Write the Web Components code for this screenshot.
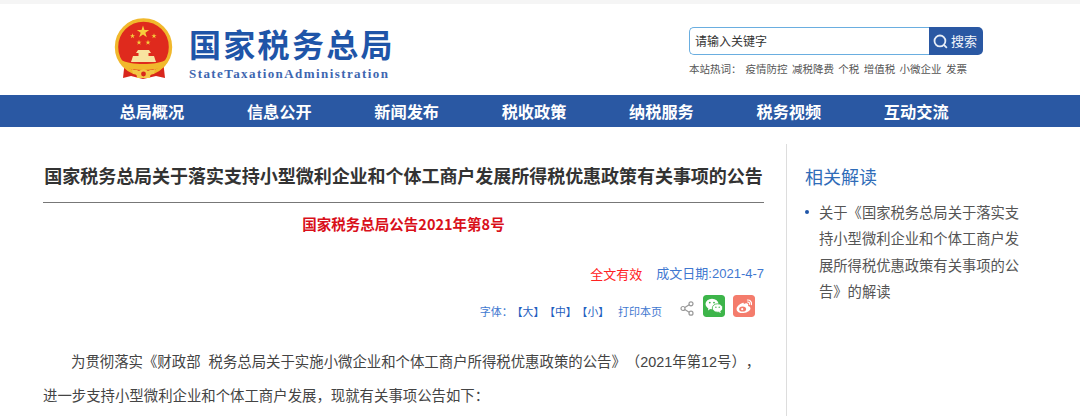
<!DOCTYPE html>
<html lang="zh">
<head>
<meta charset="utf-8">
<title>国家税务总局</title>
<style>
  html, body { margin: 0; padding: 0; background: #fff; height: 416px; overflow: hidden; }
  body { font-family: "Liberation Sans", "Noto Sans CJK SC", sans-serif; color: #444; text-spacing-trim: space-all; }
</style>
</head>
<body>
<site-header></site-header>
<main-nav></main-nav>
<page-body>
  <doc-article></doc-article>
  <side-related slot="side"></side-related>
</page-body>

<script>
// five pointed star as a polygon, for the emblem
function star(cx, cy, r, fill) {
  const pts = [];
  for (let i = 0; i < 10; i++) {
    const rad = i % 2 ? r * 0.382 : r;
    const a = -Math.PI / 2 + i * Math.PI / 5;
    pts.push((cx + rad * Math.cos(a)).toFixed(2) + "," + (cy + rad * Math.sin(a)).toFixed(2));
  }
  return `<polygon points="${pts.join(" ")}" fill="${fill}"/>`;
}

class SiteHeader extends HTMLElement {
  constructor() {
    super();
    this.attachShadow({ mode: "open" });
  }
  connectedCallback() {
    this.shadowRoot.innerHTML = `
    <style>
      :host { display: block; height: 95px; box-sizing: border-box; background: #fff; border-top: 4px solid #f5f5f5; }
      .wrap { display: flex; justify-content: space-between; height: 100%; padding: 0 97px 0 114px; }
      .logo { display: flex; gap: 15px; padding-top: 14px; }
      .logo svg { display: block; width: 60px; height: 66px; }
      .names { padding-top: 10px; }
      .cn { font: bold 32px/36px "Liberation Sans", "Noto Sans CJK SC", sans-serif; letter-spacing: 2.3px; color: #1f55a8; white-space: nowrap; }
      .en { font: bold 13px/14px "Liberation Serif", serif; letter-spacing: 1.42px; color: #3d66b0; margin-top: 3px; white-space: nowrap; }
      .tools { width: 294px; padding-top: 23px; }
      .search { display: flex; height: 28px; box-sizing: border-box; }
      .input { flex: 1; box-sizing: border-box; border: 1px solid #6aaee0; border-right: 0; border-radius: 5px 0 0 5px; font: 12px/25px "Noto Sans CJK SC", sans-serif; color: #333; padding-left: 5px; }
      .btn { width: 54px; box-sizing: border-box; padding-left: 4px; display: flex; align-items: center; gap: 3px; background: #2a58a3; border-radius: 0 5px 5px 0; color: #f2f5fa; font: 13px/26px "Noto Sans CJK SC", sans-serif; }
      .btn svg { width: 15px; height: 15px; }
      .hot { display: flex; margin-top: 6px; font: 10.5px/16px "Noto Sans CJK SC", sans-serif; color: #555; white-space: nowrap; }
      .hot span { margin-right: 4.4px; }
      .hot .lead { margin-right: 4px; }
    </style>
    <div class="wrap">
      <div class="logo">
        <svg viewBox="0 0 60 66">
          <path d="M11 42 L9 60 L17 58 L29 61 L42 58 L51 60 L49 42 Z" fill="#d8261c"/>
          <circle cx="29.5" cy="29" r="27" fill="#df2a1d" stroke="#f1b82c" stroke-width="3.4"/>
          ${star(29, 14, 6.5, "#f6cf3d")}
          ${star(18.5, 18, 2.7, "#f6cf3d")}
          ${star(40, 18, 2.7, "#f6cf3d")}
          ${star(25, 24.5, 2.7, "#f6cf3d")}
          ${star(34, 24.5, 2.7, "#f6cf3d")}
          <path d="M24 32 H35 L37 35 H34.5 V38 H40 L42 44 H17 L19 38 H24.5 V35 H22 Z" fill="#f8e4a0"/>
          <path d="M5 41 C12 45 20 46 29.5 46 C39 46 47 45 54 41 L51 48 C45 51 38 52 29.5 52 C21 52 14 51 8 48 Z" fill="#f1b82c"/>
          <path d="M18 51 C21 53 23 51 25 53 C27 51 32 51 34 53 C36 51 38 53 41 51 L40 56 C37 55 36 57 36 60 H23 C23 57 22 55 19 56 Z" fill="#f3c648"/>
          <circle cx="29.5" cy="56" r="2.4" fill="#d8261c"/>
        </svg>
        <div class="names">
          <div class="cn">国家税务总局</div>
          <div class="en">StateTaxationAdministration</div>
        </div>
      </div>
      <div class="tools">
        <div class="search">
          <div class="input">请输入关键字</div>
          <div class="btn">
            <svg viewBox="0 0 16 16" fill="none" stroke="#e8eef7" stroke-width="1.9"><circle cx="7.4" cy="7.4" r="5.8"/><path d="M11.6 11.6 L14.8 14.8"/></svg>
            <span>搜索</span>
          </div>
        </div>
        <div class="hot"><span class="lead">本站热词：</span><span>疫情防控</span><span>减税降费</span><span>个税</span><span>增值税</span><span>小微企业</span><span>发票</span></div>
      </div>
    </div>`;
  }
}

class MainNav extends HTMLElement {
  constructor() {
    super();
    this.attachShadow({ mode: "open" });
  }
  connectedCallback() {
    const items = ["总局概况", "信息公开", "新闻发布", "税收政策", "纳税服务", "税务视频", "互动交流"];
    this.shadowRoot.innerHTML = `
    <style>
      :host { display: block; height: 32px; background: #2a58a3; }
      ul { display: flex; gap: 63px; margin: 0; padding: 0 0 0 119.5px; list-style: none; }
      li { width: 64.4px; font: bold 16.2px/32px "Noto Sans CJK SC", sans-serif; color: #fff; white-space: nowrap; }
    </style>
    <ul>${items.map(t => `<li>${t}</li>`).join("")}</ul>`;
  }
}

class PageBody extends HTMLElement {
  constructor() {
    super();
    this.attachShadow({ mode: "open" });
  }
  connectedCallback() {
    this.shadowRoot.innerHTML = `
    <style>
      :host { display: flex; align-items: flex-start; padding: 17px 0 0 43px; }
      .side { margin-left: 22px; }
    </style>
    <slot></slot>
    <div class="side"><slot name="side"></slot></div>`;
  }
}

class DocArticle extends HTMLElement {
  constructor() {
    super();
    this.attachShadow({ mode: "open" });
  }
  connectedCallback() {
    this.shadowRoot.innerHTML = `
    <style>
      :host { display: block; width: 721px; font-family: "Noto Sans CJK SC", sans-serif; text-spacing-trim: space-all; }
      h1 { margin: 0; padding: 17px 0 12px; border-bottom: 1px solid #777; font-size: 18px; letter-spacing: -0.04px; line-height: 29px; font-weight: bold; color: #333; text-align: center; white-space: nowrap; }
      .no { margin-top: 10px; font-size: 14.5px; line-height: 22px; font-weight: bold; color: #d9101a; text-align: center; }
      .meta { display: flex; justify-content: flex-end; gap: 14px; margin-top: 29px; font-size: 13px; line-height: 20px; }
      .valid { color: #f22; }
      .date { color: #3f78d0; font-family: "Liberation Sans", "Noto Sans CJK SC", sans-serif; }
      .tools { display: flex; justify-content: flex-end; align-items: center; height: 26px; margin-top: 9px; padding-right: 9px; font-size: 11px; color: #3f78d0; }
      .tools span, .tools a { margin-top: 10px; }
      .tools .sizes { margin-left: -1px; font-size: 10.8px; color: #1f60c0; }
      .tools a { margin-left: 9px; color: #3f78d0; }
      .share { width: 14px; height: 15px; margin: 4px 9px 0 18px; }
      .badge { width: 22px; height: 22px; border-radius: 3px; }
      .wx { margin-right: 8px; }
      p { margin: 0; font-family: "Liberation Sans", "Noto Sans CJK SC", sans-serif; font-size: 14.4px; line-height: 34px; color: #444; white-space: nowrap; }
      .body { margin-top: 26px; }
      .indent { padding-left: 28px; }
    </style>
    <h1>国家税务总局关于落实支持小型微利企业和个体工商户发展所得税优惠政策有关事项的公告</h1>
    <div class="no">国家税务总局公告2021年第8号</div>
    <div class="meta"><span class="valid">全文有效</span><span class="date">成文日期:2021-4-7</span></div>
    <div class="tools">
      <span>字体：</span>
      <span class="sizes">【大】【中】【小】</span>
      <a>打印本页</a>
      <svg class="share" viewBox="0 0 14 15" fill="none" stroke="#999" stroke-width="1.2"><circle cx="11" cy="2.8" r="2"/><circle cx="3" cy="7.5" r="2"/><circle cx="11" cy="12.2" r="2"/><path d="M4.8 6.5 L9.2 3.8 M4.8 8.5 L9.2 11.2"/></svg>
      <svg class="badge wx" viewBox="0 0 22 22"><rect width="22" height="22" rx="3" fill="#3db54a"/><ellipse cx="9" cy="9" rx="6.5" ry="5.2" fill="#fff"/><path d="M5.5 12.5 L5 15.5 L8 13.5 Z" fill="#fff"/><ellipse cx="14.5" cy="13" rx="5.2" ry="4.2" fill="#fff" stroke="#3db54a" stroke-width=".8"/><path d="M17 16 L18 18 L15 16.8 Z" fill="#fff"/><circle cx="6.8" cy="7.6" r=".9" fill="#3db54a"/><circle cx="11" cy="7.6" r=".9" fill="#3db54a"/><circle cx="12.9" cy="12.2" r=".7" fill="#3db54a"/><circle cx="16.2" cy="12.2" r=".7" fill="#3db54a"/></svg>
      <svg class="badge" viewBox="0 0 22 22"><rect width="22" height="22" rx="3" fill="#f47c6c"/><path d="M9.5 8 C5.8 9.4 3.4 12 3.6 14.4 C3.8 16.8 7 18.4 10.6 18 C14.6 17.6 17.8 15.4 17.4 13 C17.2 11.8 16 11.2 15 11 C15.6 9.6 15.2 8.6 14 8.4 C13 8.2 11.6 8.8 10.8 9.2 C11 8 10.6 7.4 9.5 8 Z" fill="#fff"/><ellipse cx="9.6" cy="14" rx="3.5" ry="2.6" fill="#f47c6c"/><circle cx="9.2" cy="14.2" r="1.1" fill="#fff"/><path d="M14.4 5 C17 4.8 19 7 18.4 9.6 M14.6 7 C16 6.9 16.9 8 16.5 9.3" fill="none" stroke="#fff" stroke-width="1.2" stroke-linecap="round"/></svg>
    </div>
    <div class="body">
      <p class="indent">为贯彻落实《财政部&nbsp;&nbsp;税务总局关于实施小微企业和个体工商户所得税优惠政策的公告》（2021年第12号），</p>
      <p>进一步支持小型微利企业和个体工商户发展，现就有关事项公告如下：</p>
    </div>`;
  }
}

class SideRelated extends HTMLElement {
  constructor() {
    super();
    this.attachShadow({ mode: "open" });
  }
  connectedCallback() {
    this.shadowRoot.innerHTML = `
    <style>
      :host { display: block; width: 294px; height: 272px; box-sizing: border-box; border-left: 1px solid #ddd; padding: 18px 0 0 18px; font-family: "Noto Sans CJK SC", sans-serif; text-spacing-trim: space-all; }
      h2 { margin: 0; font-size: 18px; line-height: 28px; font-weight: normal; color: #2f6cb8; }
      ul { margin: 9px 0 0; padding: 0; list-style: none; }
      li { position: relative; width: 204px; padding-left: 14px; font-size: 14.3px; line-height: 26.4px; color: #555; }
      li::before { content: ""; position: absolute; left: 0; top: 11px; width: 4px; height: 4px; border-radius: 50%; background: #1f55a8; }
    </style>
    <h2>相关解读</h2>
    <ul><li>关于《国家税务总局关于落实支持小型微利企业和个体工商户发展所得税优惠政策有关事项的公告》的解读</li></ul>`;
  }
}

customElements.define("site-header", SiteHeader);
customElements.define("main-nav", MainNav);
customElements.define("page-body", PageBody);
customElements.define("doc-article", DocArticle);
customElements.define("side-related", SideRelated);
</script>
</body>
</html>
